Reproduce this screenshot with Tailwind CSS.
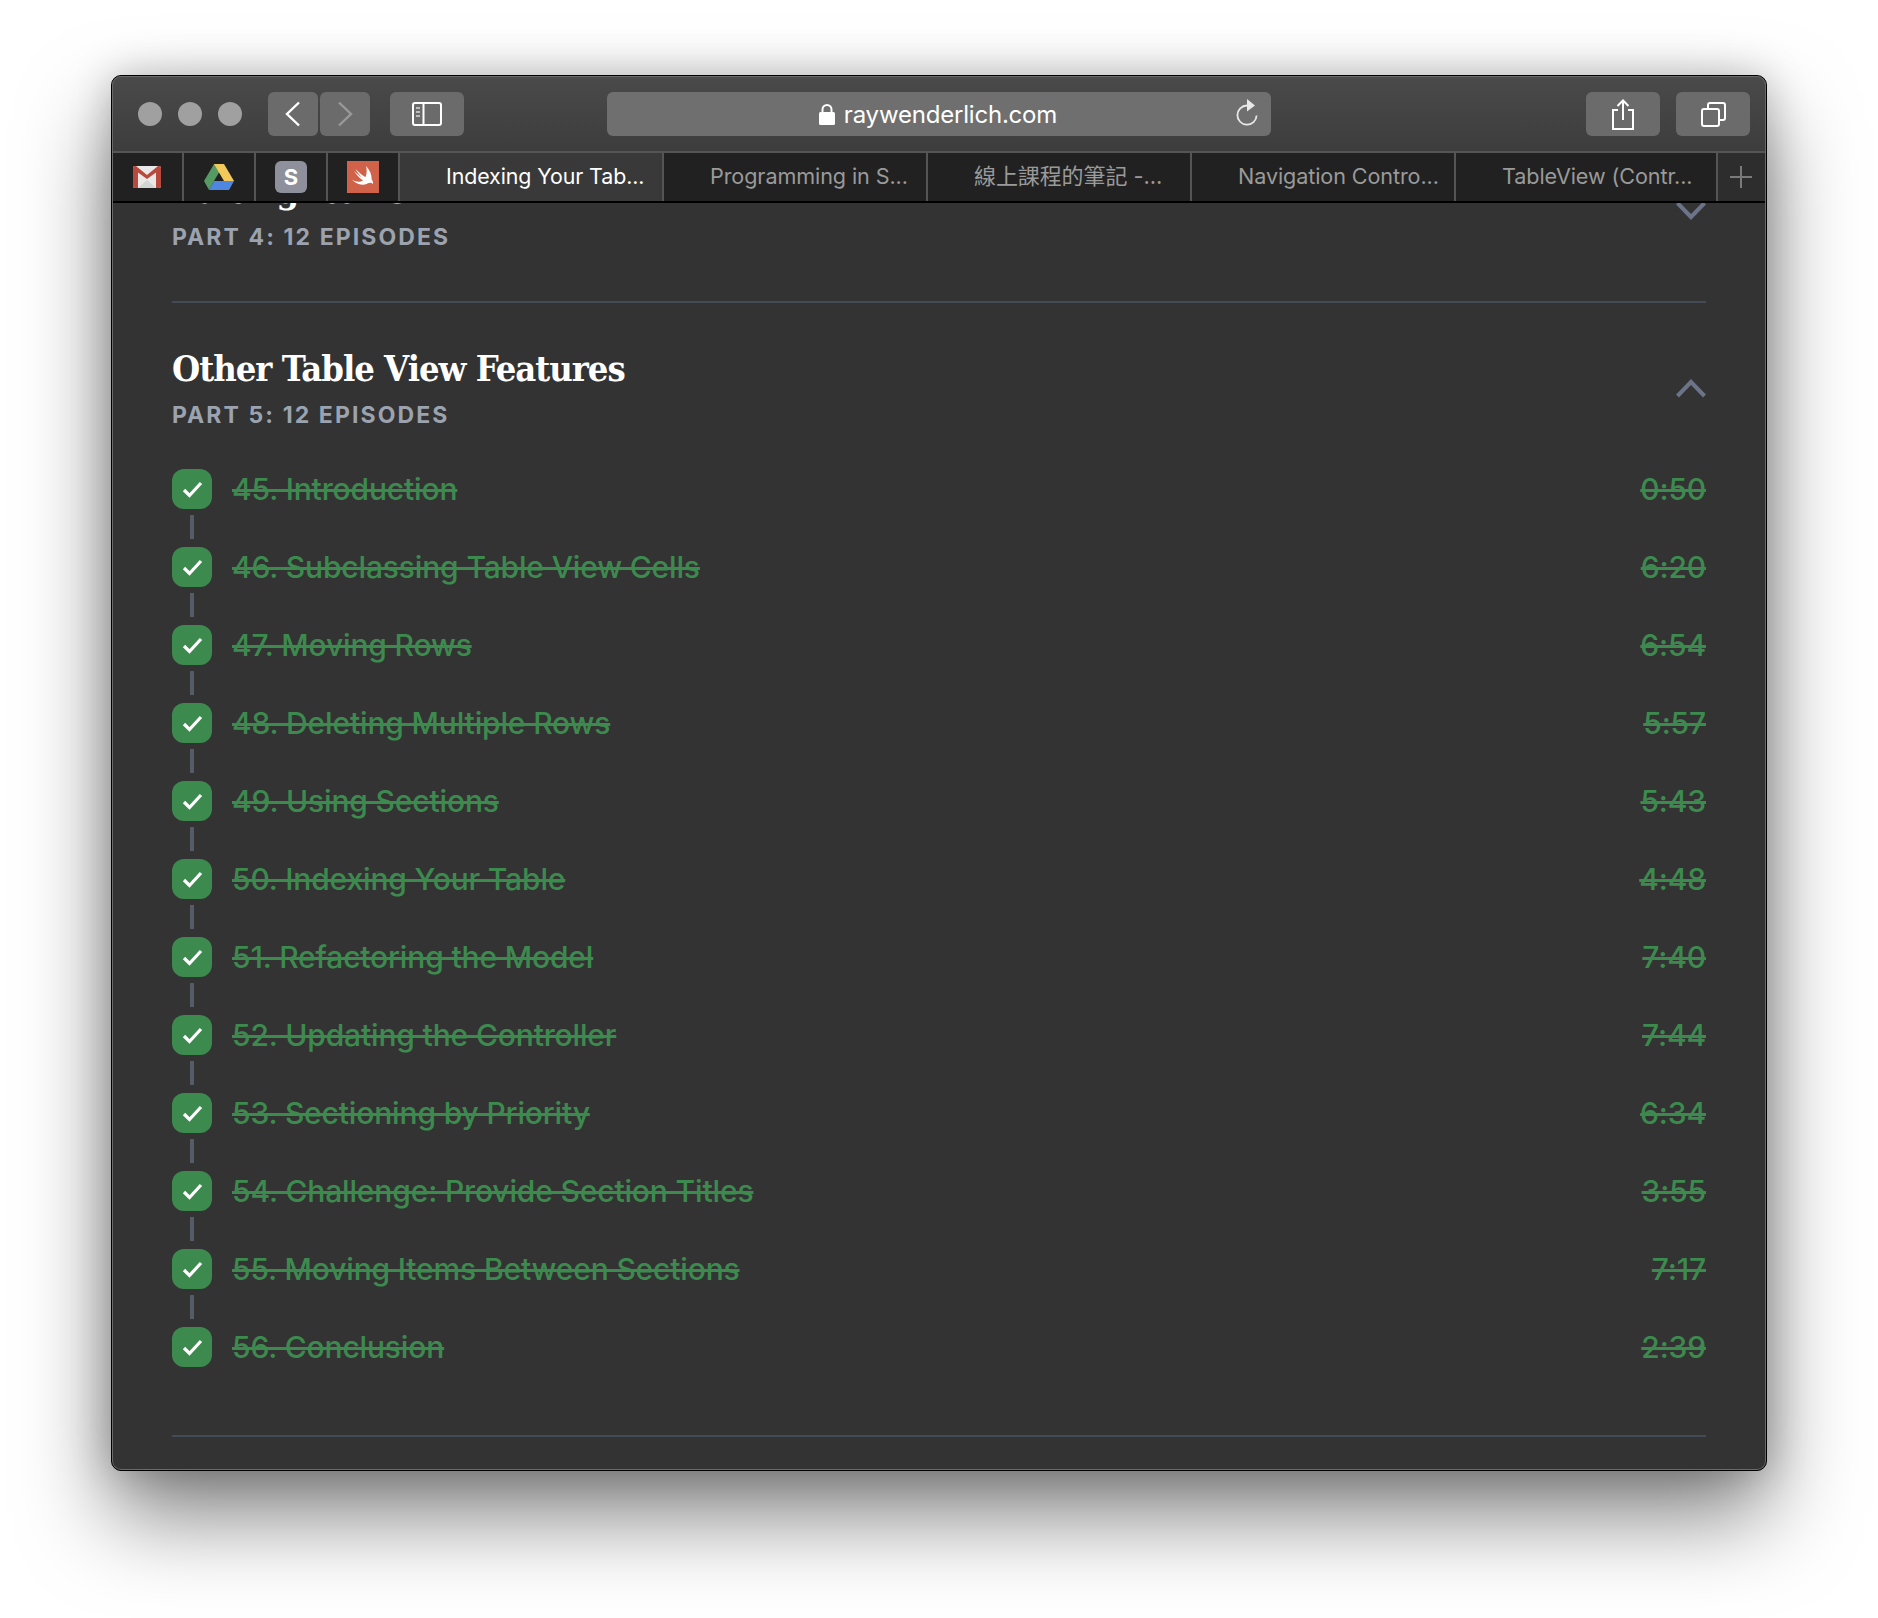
<!DOCTYPE html>
<html lang="en">
<head>
<meta charset="UTF-8">
<title>raywenderlich.com</title>
<script src="https://cdn.jsdelivr.net/npm/@tailwindcss/browser@4"></script>
</head>
<body class="bg-white font-['Inter','Noto_Sans_CJK_TC',sans-serif]">
<div class="w-[1878px] h-[1618px] pl-[111px] pt-[75px] overflow-hidden">
  <!-- window -->
  <div class="relative w-[1656px] h-[1396px] rounded-[10px] border border-black bg-[#333333] shadow-[0_44px_88px_rgba(0,0,0,0.5),0_0_40px_rgba(0,0,0,0.22)] overflow-hidden">

    <!-- toolbar -->
    <div class="h-[75px] flex items-start pt-[16px] bg-gradient-to-b from-[#4a4a4a] to-[#3d3d3d]">
      <div class="flex gap-[16px] ml-[26px] mt-[10px]">
        <span class="w-[24px] h-[24px] rounded-full bg-[#a0a0a0]"></span>
        <span class="w-[24px] h-[24px] rounded-full bg-[#a0a0a0]"></span>
        <span class="w-[24px] h-[24px] rounded-full bg-[#a0a0a0]"></span>
      </div>
      <div class="flex gap-[2px] ml-[26px]">
        <button class="w-[50px] h-[44px] rounded-[6px] bg-[#6b6b6b] flex items-center justify-center">
          <svg width="16" height="26" viewBox="0 0 16 26" fill="none" stroke="#fff" stroke-width="2.4"><path d="M14 1.500 2 13l12 11.500"/></svg>
        </button>
        <button class="w-[50px] h-[44px] rounded-[6px] bg-[#6b6b6b] flex items-center justify-center">
          <svg width="16" height="26" viewBox="0 0 16 26" fill="none" stroke="#999" stroke-width="2.4"><path d="M2 1.500 14 13 2 24.500"/></svg>
        </button>
      </div>
      <button class="w-[74px] h-[44px] ml-[20px] rounded-[6px] bg-[#6b6b6b] flex items-center justify-center">
        <svg width="30" height="24" viewBox="0 0 30 24" fill="none" stroke="#fff" stroke-width="2"><rect x="1" y="1" width="28" height="22" rx="2"/><path d="M11.500 1v22"/><path d="M4 6h4M4 10h4M4 14h4" stroke="#bbb"/></svg>
      </button>
      <div class="relative w-[664px] h-[44px] ml-[143px] rounded-[6px] bg-[#6f6f6f] flex items-center justify-center gap-[9px] pr-[2px]">
        <svg width="16" height="21" viewBox="0 0 16 21" fill="none"><rect x="0" y="8" width="16" height="13" rx="1.500" fill="#fff"/><path d="M3.500 9V5.500a4.500 4.500 0 0 1 9 0V9" stroke="#fff" stroke-width="2"/></svg>
        <span class="text-[24px] leading-[30px] pt-[2px] text-white tracking-[-0.2px]">raywenderlich.com</span>
        <svg class="absolute right-[12px] top-[7px]" width="24" height="28" viewBox="0 0 24 28" fill="none"><path d="M12 6.500a9.600 9.600 0 1 0 9.600 10" stroke="#e8e8e8" stroke-width="1.800"/><path d="M12 0l8 6.500-8 6z" fill="#e8e8e8"/></svg>
      </div>
      <button class="w-[74px] h-[44px] ml-[315px] rounded-[6px] bg-[#6b6b6b] flex items-center justify-center">
        <svg width="24" height="31" viewBox="0 0 24 31" fill="none" stroke="#fff" stroke-width="2"><path d="M7 11H2v19h20V11h-5"/><path d="M12 21V2M6.500 7 12 1.500 17.500 7"/></svg>
      </button>
      <button class="w-[74px] h-[44px] ml-[16px] rounded-[6px] bg-[#6b6b6b] flex items-center justify-center">
        <svg width="25" height="25" viewBox="0 0 25 25" fill="none" stroke="#fff" stroke-width="2"><rect x="1" y="7" width="17" height="17" rx="2"/><path d="M7 7V3a2 2 0 0 1 2-2h13a2 2 0 0 1 2 2v13a2 2 0 0 1-2 2h-4"/></svg>
      </button>
    </div>

    <!-- tab bar -->
    <div class="h-[52px] flex border-t-2 border-b-2 border-t-[#555555] border-b-black bg-[#212121] text-[21.6px] leading-[46px] text-[#9a9a9a] tracking-[-0.1px]">
      <div class="w-[72px] border-r-2 border-[#555555] flex items-center justify-center">
        <svg width="28" height="22" viewBox="0 0 28 22"><rect x="0" y="0" width="28" height="22" rx="2" fill="#e8e8e8"/><path d="M5 22 14 14l9 8z" fill="#d4d4d4"/><path d="M0 2a2 2 0 0 1 2-2h1l11 9 11-9h1a2 2 0 0 1 2 2v18a2 2 0 0 1-2 2h-3V6.500l-9 6.500-9-6.500V22H2a2 2 0 0 1-2-2z" fill="#b8493c"/></svg>
      </div>
      <div class="w-[72px] border-r-2 border-[#555555] flex items-center justify-center">
        <svg width="30" height="26" viewBox="0 0 30 26"><path d="M10 0h10L10 17 5 26 0 17z" fill="#559a62"/><path d="M10 0h10l10 17H20z" fill="#f3c95c"/><path d="M5 26l5-9h20l-5 9z" fill="#4f86e0"/></svg>
      </div>
      <div class="w-[72px] border-r-2 border-[#555555] flex items-center justify-center">
        <span class="w-[32px] h-[32px] rounded-[6px] bg-[#8e919c] text-white text-[22px] leading-[32px] font-bold text-center">S</span>
      </div>
      <div class="w-[72px] border-r-2 border-[#555555] flex items-center justify-center">
        <svg width="32" height="32" viewBox="0 0 32 32"><rect width="32" height="32" fill="#cf6249"/><path d="M19 5C22.500 9 25 13.500 24.500 18 25.500 19.500 26.500 21.500 26 23 24.500 21.500 22.500 21.500 20.500 22.500 15.500 25 9 23.500 5 18.500 8.500 21 13 21.500 16 19.500 12.500 17 9 13 6.500 9.500 9.500 12.500 13 15 15 16.500 12.500 14 10 11 8.500 8 12 11.500 16 15 18.500 16 20 12.500 20 8.500 19 5Z" fill="#fff"/></svg>
      </div>
      <div class="w-[264px] border-r-2 border-[#555555] bg-[#393939] pl-[46px] text-[21.4px] text-white whitespace-nowrap">Indexing Your Tab...</div>
      <div class="w-[264px] border-r-2 border-[#555555] pl-[46px] whitespace-nowrap">Programming in S...</div>
      <div class="w-[264px] border-r-2 border-[#555555] pl-[46px] text-[22px] whitespace-nowrap">線上課程的筆記 -...</div>
      <div class="w-[264px] border-r-2 border-[#555555] pl-[46px] whitespace-nowrap">Navigation Contro...</div>
      <div class="w-[262px] border-r-2 border-[#555555] pl-[46px] whitespace-nowrap">TableView (Contr...</div>
      <div class="flex-1 bg-[#2d2d2d] flex items-center justify-center pr-[2px]">
        <svg width="22" height="22" viewBox="0 0 22 22" stroke="#7a7a7a" stroke-width="2"><path d="M11 0v22M0 11h22"/></svg>
      </div>
    </div>

    <!-- scrolled course content -->
    <div class="h-[1268px] overflow-hidden px-[60px]">
      <div class="-mt-[34px]">
        <div class="flex items-center justify-between pb-[50px] h-[134px] border-b-2 border-[#454a57]">
          <div>
            <h3 class="font-['DejaVu_Serif',serif] [font-stretch:condensed] font-bold text-[36px] leading-[42px] pt-[1px] tracking-[-1px] text-white">Editing Items</h3>
            <p class="mt-[11px] text-[23px] leading-[30px] font-bold tracking-[2.1px] text-[#9ca3af]">PART 4: 12 EPISODES</p>
          </div>
          <svg width="30" height="19" viewBox="0 0 30 19" fill="none" stroke="#6b7488" stroke-width="4"><path d="M1.500 2 15 16 28.500 2"/></svg>
        </div>

        <div class="flex items-center justify-between pt-[43px]">
          <div>
            <h3 class="font-['DejaVu_Serif',serif] [font-stretch:condensed] font-bold text-[36px] leading-[42px] pt-[1px] tracking-[-1px] text-white">Other Table View Features</h3>
            <p class="mt-[11px] text-[23px] leading-[30px] font-bold tracking-[2.1px] text-[#9ca3af]">PART 5: 12 EPISODES</p>
          </div>
          <svg width="30" height="19" viewBox="0 0 30 19" fill="none" stroke="#6b7488" stroke-width="4"><path d="M1.500 17 15 3 28.500 17"/></svg>
        </div>

        <ul class="mt-[39px] pb-[68px] border-b-2 border-[#454a57] text-[30px] leading-[40px] font-medium tracking-[-0.15px] text-[#3d8a4f] line-through">
          <li class="flex items-start">
            <div class="w-[40px] flex flex-col items-center"><span class="w-[40px] h-[40px] rounded-[12px] bg-[#3d8a4f] flex items-center justify-center"><svg width="21" height="17" viewBox="0 0 20 17" fill="none" stroke="#fff" stroke-width="3.200"><path d="M1.500 9l5.500 5.500L18.500 2"/></svg></span><span class="w-[4px] h-[24px] mt-[6px] mb-[8px] bg-[#565b68]"></span></div>
            <span class="ml-[20px]">45. Introduction</span><span class="ml-auto">0:50</span>
          </li>
          <li class="flex items-start">
            <div class="w-[40px] flex flex-col items-center"><span class="w-[40px] h-[40px] rounded-[12px] bg-[#3d8a4f] flex items-center justify-center"><svg width="21" height="17" viewBox="0 0 20 17" fill="none" stroke="#fff" stroke-width="3.200"><path d="M1.500 9l5.500 5.500L18.500 2"/></svg></span><span class="w-[4px] h-[24px] mt-[6px] mb-[8px] bg-[#565b68]"></span></div>
            <span class="ml-[20px]">46. Subclassing Table View Cells</span><span class="ml-auto">6:20</span>
          </li>
          <li class="flex items-start">
            <div class="w-[40px] flex flex-col items-center"><span class="w-[40px] h-[40px] rounded-[12px] bg-[#3d8a4f] flex items-center justify-center"><svg width="21" height="17" viewBox="0 0 20 17" fill="none" stroke="#fff" stroke-width="3.200"><path d="M1.500 9l5.500 5.500L18.500 2"/></svg></span><span class="w-[4px] h-[24px] mt-[6px] mb-[8px] bg-[#565b68]"></span></div>
            <span class="ml-[20px]">47. Moving Rows</span><span class="ml-auto">6:54</span>
          </li>
          <li class="flex items-start">
            <div class="w-[40px] flex flex-col items-center"><span class="w-[40px] h-[40px] rounded-[12px] bg-[#3d8a4f] flex items-center justify-center"><svg width="21" height="17" viewBox="0 0 20 17" fill="none" stroke="#fff" stroke-width="3.200"><path d="M1.500 9l5.500 5.500L18.500 2"/></svg></span><span class="w-[4px] h-[24px] mt-[6px] mb-[8px] bg-[#565b68]"></span></div>
            <span class="ml-[20px]">48. Deleting Multiple Rows</span><span class="ml-auto">5:57</span>
          </li>
          <li class="flex items-start">
            <div class="w-[40px] flex flex-col items-center"><span class="w-[40px] h-[40px] rounded-[12px] bg-[#3d8a4f] flex items-center justify-center"><svg width="21" height="17" viewBox="0 0 20 17" fill="none" stroke="#fff" stroke-width="3.200"><path d="M1.500 9l5.500 5.500L18.500 2"/></svg></span><span class="w-[4px] h-[24px] mt-[6px] mb-[8px] bg-[#565b68]"></span></div>
            <span class="ml-[20px]">49. Using Sections</span><span class="ml-auto">5:43</span>
          </li>
          <li class="flex items-start">
            <div class="w-[40px] flex flex-col items-center"><span class="w-[40px] h-[40px] rounded-[12px] bg-[#3d8a4f] flex items-center justify-center"><svg width="21" height="17" viewBox="0 0 20 17" fill="none" stroke="#fff" stroke-width="3.200"><path d="M1.500 9l5.500 5.500L18.500 2"/></svg></span><span class="w-[4px] h-[24px] mt-[6px] mb-[8px] bg-[#565b68]"></span></div>
            <span class="ml-[20px]">50. Indexing Your Table</span><span class="ml-auto">4:48</span>
          </li>
          <li class="flex items-start">
            <div class="w-[40px] flex flex-col items-center"><span class="w-[40px] h-[40px] rounded-[12px] bg-[#3d8a4f] flex items-center justify-center"><svg width="21" height="17" viewBox="0 0 20 17" fill="none" stroke="#fff" stroke-width="3.200"><path d="M1.500 9l5.500 5.500L18.500 2"/></svg></span><span class="w-[4px] h-[24px] mt-[6px] mb-[8px] bg-[#565b68]"></span></div>
            <span class="ml-[20px]">51. Refactoring the Model</span><span class="ml-auto">7:40</span>
          </li>
          <li class="flex items-start">
            <div class="w-[40px] flex flex-col items-center"><span class="w-[40px] h-[40px] rounded-[12px] bg-[#3d8a4f] flex items-center justify-center"><svg width="21" height="17" viewBox="0 0 20 17" fill="none" stroke="#fff" stroke-width="3.200"><path d="M1.500 9l5.500 5.500L18.500 2"/></svg></span><span class="w-[4px] h-[24px] mt-[6px] mb-[8px] bg-[#565b68]"></span></div>
            <span class="ml-[20px]">52. Updating the Controller</span><span class="ml-auto">7:44</span>
          </li>
          <li class="flex items-start">
            <div class="w-[40px] flex flex-col items-center"><span class="w-[40px] h-[40px] rounded-[12px] bg-[#3d8a4f] flex items-center justify-center"><svg width="21" height="17" viewBox="0 0 20 17" fill="none" stroke="#fff" stroke-width="3.200"><path d="M1.500 9l5.500 5.500L18.500 2"/></svg></span><span class="w-[4px] h-[24px] mt-[6px] mb-[8px] bg-[#565b68]"></span></div>
            <span class="ml-[20px]">53. Sectioning by Priority</span><span class="ml-auto">6:34</span>
          </li>
          <li class="flex items-start">
            <div class="w-[40px] flex flex-col items-center"><span class="w-[40px] h-[40px] rounded-[12px] bg-[#3d8a4f] flex items-center justify-center"><svg width="21" height="17" viewBox="0 0 20 17" fill="none" stroke="#fff" stroke-width="3.200"><path d="M1.500 9l5.500 5.500L18.500 2"/></svg></span><span class="w-[4px] h-[24px] mt-[6px] mb-[8px] bg-[#565b68]"></span></div>
            <span class="ml-[20px]">54. Challenge: Provide Section Titles</span><span class="ml-auto">3:55</span>
          </li>
          <li class="flex items-start">
            <div class="w-[40px] flex flex-col items-center"><span class="w-[40px] h-[40px] rounded-[12px] bg-[#3d8a4f] flex items-center justify-center"><svg width="21" height="17" viewBox="0 0 20 17" fill="none" stroke="#fff" stroke-width="3.200"><path d="M1.500 9l5.500 5.500L18.500 2"/></svg></span><span class="w-[4px] h-[24px] mt-[6px] mb-[8px] bg-[#565b68]"></span></div>
            <span class="ml-[20px]">55. Moving Items Between Sections</span><span class="ml-auto">7:17</span>
          </li>
          <li class="flex items-start">
            <div class="w-[40px] flex flex-col items-center"><span class="w-[40px] h-[40px] rounded-[12px] bg-[#3d8a4f] flex items-center justify-center"><svg width="21" height="17" viewBox="0 0 20 17" fill="none" stroke="#fff" stroke-width="3.200"><path d="M1.500 9l5.500 5.500L18.500 2"/></svg></span></div>
            <span class="ml-[20px]">56. Conclusion</span><span class="ml-auto">2:39</span>
          </li>
        </ul>
      </div>
    </div>

    <!-- thin lighter edge on the window -->
    <div class="absolute inset-0 rounded-[9px] border border-[#6a6a6a] pointer-events-none"></div>
  </div>
</div>
</body>
</html>
